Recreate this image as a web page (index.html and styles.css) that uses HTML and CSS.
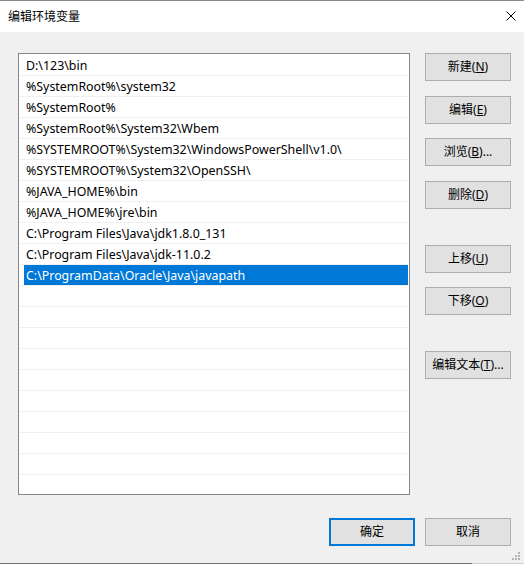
FILE: index.html
```html
<!DOCTYPE html>
<html lang="zh-CN">
<head>
<meta charset="utf-8">
<title>编辑环境变量</title>
<link rel="stylesheet" href="styles.css">
</head>
<body>
<div class="window">
  <div class="titlebar">
    <span class="title">编辑环境变量</span>
    <svg class="close" width="10" height="10" viewBox="0 0 10 10"><path d="M0.5 0.5 L9.5 9.5 M9.5 0.5 L0.5 9.5" stroke="#000" stroke-width="1" fill="none"/></svg>
  </div>
  <div class="content">
    <div class="main">
      <div class="list">
        <div class="row"><span class="label">D:\123\bin</span></div>
        <div class="row"><span class="label">%SystemRoot%\system32</span></div>
        <div class="row"><span class="label">%SystemRoot%</span></div>
        <div class="row"><span class="label">%SystemRoot%\System32\Wbem</span></div>
        <div class="row"><span class="label">%SYSTEMROOT%\System32\WindowsPowerShell\v1.0\</span></div>
        <div class="row"><span class="label">%SYSTEMROOT%\System32\OpenSSH\</span></div>
        <div class="row"><span class="label">%JAVA_HOME%\bin</span></div>
        <div class="row"><span class="label">%JAVA_HOME%\jre\bin</span></div>
        <div class="row"><span class="label">C:\Program Files\Java\jdk1.8.0_131</span></div>
        <div class="row"><span class="label">C:\Program Files\Java\jdk-11.0.2</span></div>
        <div class="row selected"><span class="label">C:\ProgramData\Oracle\Java\javapath</span></div>
        <div class="row"></div>
        <div class="row"></div>
        <div class="row"></div>
        <div class="row"></div>
        <div class="row"></div>
        <div class="row"></div>
        <div class="row"></div>
        <div class="row"></div>
        <div class="row"></div>
        <div class="row"></div>
      </div>
      <div class="side">
        <button class="btn b-new">新建(<u>N</u>)</button>
        <button class="btn b-edit">编辑(<u>E</u>)</button>
        <button class="btn b-browse">浏览(<u>B</u>)...</button>
        <button class="btn b-del">删除(<u>D</u>)</button>
        <button class="btn b-up">上移(<u>U</u>)</button>
        <button class="btn b-down">下移(<u>O</u>)</button>
        <button class="btn b-text">编辑文本(<u>T</u>)...</button>
      </div>
    </div>
    <div class="footer">
      <button class="btn default">确定</button>
      <button class="btn">取消</button>
    </div>
  </div>
  <div class="bottomedge"></div>
  <svg class="grip" width="8" height="8" viewBox="0 0 8 8">
    <rect x="6" y="0" width="2" height="2" fill="#b4b4b4"/>
    <rect x="3" y="3" width="2" height="2" fill="#b4b4b4"/>
    <rect x="6" y="3" width="2" height="2" fill="#b4b4b4"/>
    <rect x="0" y="6" width="2" height="2" fill="#b4b4b4"/>
    <rect x="3" y="6" width="2" height="2" fill="#b4b4b4"/>
    <rect x="6" y="6" width="2" height="2" fill="#b4b4b4"/>
  </svg>
</div>
</body>
</html>
```
FILE: styles.css
```css
* { box-sizing: border-box; }
html, body {
  margin: 0;
  padding: 0;
  width: 524px;
  height: 564px;
  overflow: hidden;
  background: #f0f0f0;
}
body {
  font-family: "Noto Sans", "Noto Sans CJK SC", sans-serif;
  font-size: 12px;
  color: #000;
}
.window {
  position: relative;
  width: 524px;
  height: 564px;
  display: flex;
  flex-direction: column;
  background: #f0f0f0;
}
.titlebar {
  height: 32px;
  background: #fff;
  border-top: 1px solid #8a8a8a;
  display: flex;
  align-items: center;
  justify-content: space-between;
  padding: 0 8px 2px 8px;
}
.title {
  font-family: "Noto Sans CJK SC", sans-serif;
  font-size: 12px;
  line-height: 16px;
}
.close { display: block; margin-right: 0px; margin-top: 1px; }
.content {
  flex: 1;
  display: flex;
  flex-direction: column;
  padding: 21px 13px 0 18px;
}
.main {
  display: flex;
  align-items: flex-start;
  gap: 15px;
}
.list {
  width: 392px;
  height: 442px;
  background: #fff;
  border: 1px solid #828790;
  padding: 1px;
  overflow: hidden;
}
.row {
  height: 21px;
  border-bottom: 1px solid #f0f0f0;
  padding-left: 4px;
  display: flex;
}
.label {
  flex: 1;
  padding-left: 2px;
  font-size: 12.4px;
  line-height: 21px;
  white-space: nowrap;
}
.selected .label {
  background: #0078d7;
  color: #fff;
}
.side {
  display: flex;
  flex-direction: column;
  width: 86px;
}
.btn {
  width: 86px;
  height: 28px;
  background: #e1e1e1;
  border: 1px solid #adadad;
  font-family: "Noto Sans", "Noto Sans CJK SC", sans-serif;
  font-size: 12px;
  color: #000;
  padding: 0;
  margin: 0;
  line-height: 16px;
}
.btn u { text-underline-offset: 1px; }
.side .b-new { margin-top: 0; }
.side .b-edit { margin-top: 15px; }
.side .b-browse { margin-top: 14px; }
.side .b-del { margin-top: 15px; }
.side .b-up { margin-top: 36px; }
.side .b-down { margin-top: 14px; }
.side .b-text { margin-top: 36px; }
.footer {
  display: flex;
  justify-content: flex-end;
  gap: 10px;
  margin-top: 23px;
}
.btn.default {
  border: 2px solid #0078d7;
}
.bottomedge {
  height: 1px;
  background: linear-gradient(to right, #6e6e6e 0, #6e6e6e 472px, #cfcfcf 472px);
  margin-top: auto;
}
.grip {
  position: absolute;
  right: 4px;
  bottom: 4px;
}
```
